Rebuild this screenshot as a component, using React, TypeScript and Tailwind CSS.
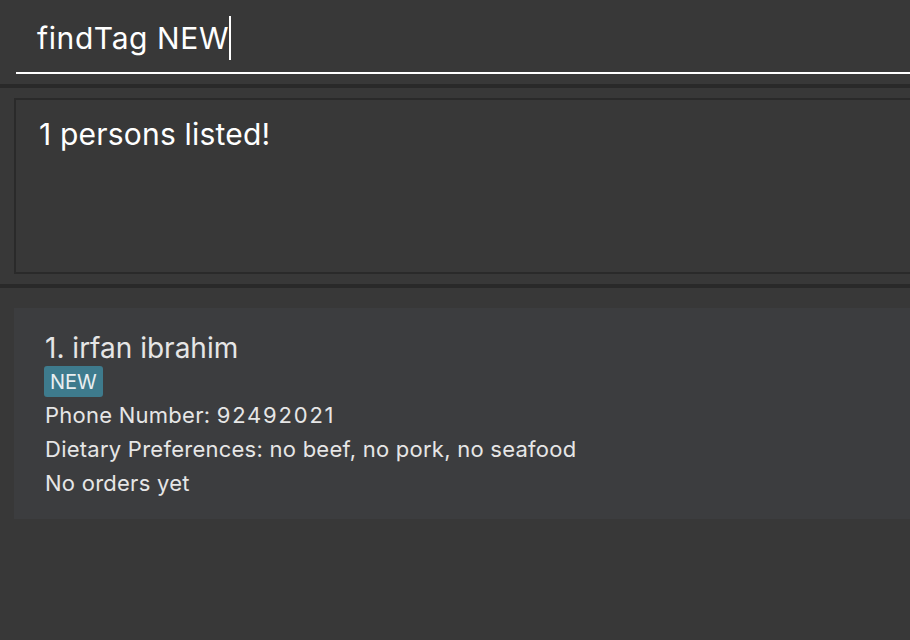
import { useState } from "react";

const person = {
  index: 1,
  name: "irfan ibrahim",
  tags: ["NEW"],
  phone: "92492021",
  diet: "no beef, no pork, no seafood",
};

function PersonCard() {
  return (
    <div className="ml-[14px] flex flex-col bg-[#3c3d3f] pt-[22px] pb-[19px] pl-[31px] text-[#e6e6e6]">
      <span className="text-[28px] leading-[36px]">
        {person.index}. {person.name}
      </span>
      <div className="flex gap-2">
        {person.tags.map((t) => (
          <span
            key={t}
            className="-ml-[1px] flex h-[31px] items-center rounded-[3px] bg-[#3e7b8d] px-[6px] text-[20px] text-[#e8eef0]"
          >
            {t}
          </span>
        ))}
      </div>
      <div className="mt-[1px] flex flex-col text-[22px] leading-[34px] tracking-[0.25px]">
        <span>
          Phone Number: <span className="tracking-[1.8px]">{person.phone}</span>
        </span>
        <span>Dietary Preferences: {person.diet}</span>
        <span>No orders yet</span>
      </div>
    </div>
  );
}

export default function App() {
  const [command] = useState("findTag NEW");

  return (
    <div
      className="flex h-[640px] w-[910px] flex-col overflow-hidden bg-[#383838] text-white"
      style={{ fontFamily: "Inter, 'Noto Sans', sans-serif" }}
    >
      {/* command box */}
      <div className="h-[84px] pl-[16px] pt-[16px]">
        <div className="flex h-[58px] items-start border-b-2 border-white pl-[21px]">
          <span className="text-[30px] leading-[44px] tracking-[0.6px]">{command}</span>
          <span className="h-[44px] w-[2px] bg-white" />
        </div>
      </div>
      <div className="h-[4px] bg-[#292929]" />

      {/* result display */}
      <div className="h-[196px] pt-[10px] pb-[10px] pl-[14px]">
        <div className="h-[176px] border-y-2 border-l-2 border-[#2a2a2a] pl-[23px] pt-[12px]">
          <span className="text-[30px] tracking-[0.2px]">1 persons listed!</span>
        </div>
      </div>
      <div className="h-[4px] bg-[#292929]" />

      {/* person list */}
      <div className="flex-1 pt-[20px]">
        <PersonCard />
      </div>
    </div>
  );
}
